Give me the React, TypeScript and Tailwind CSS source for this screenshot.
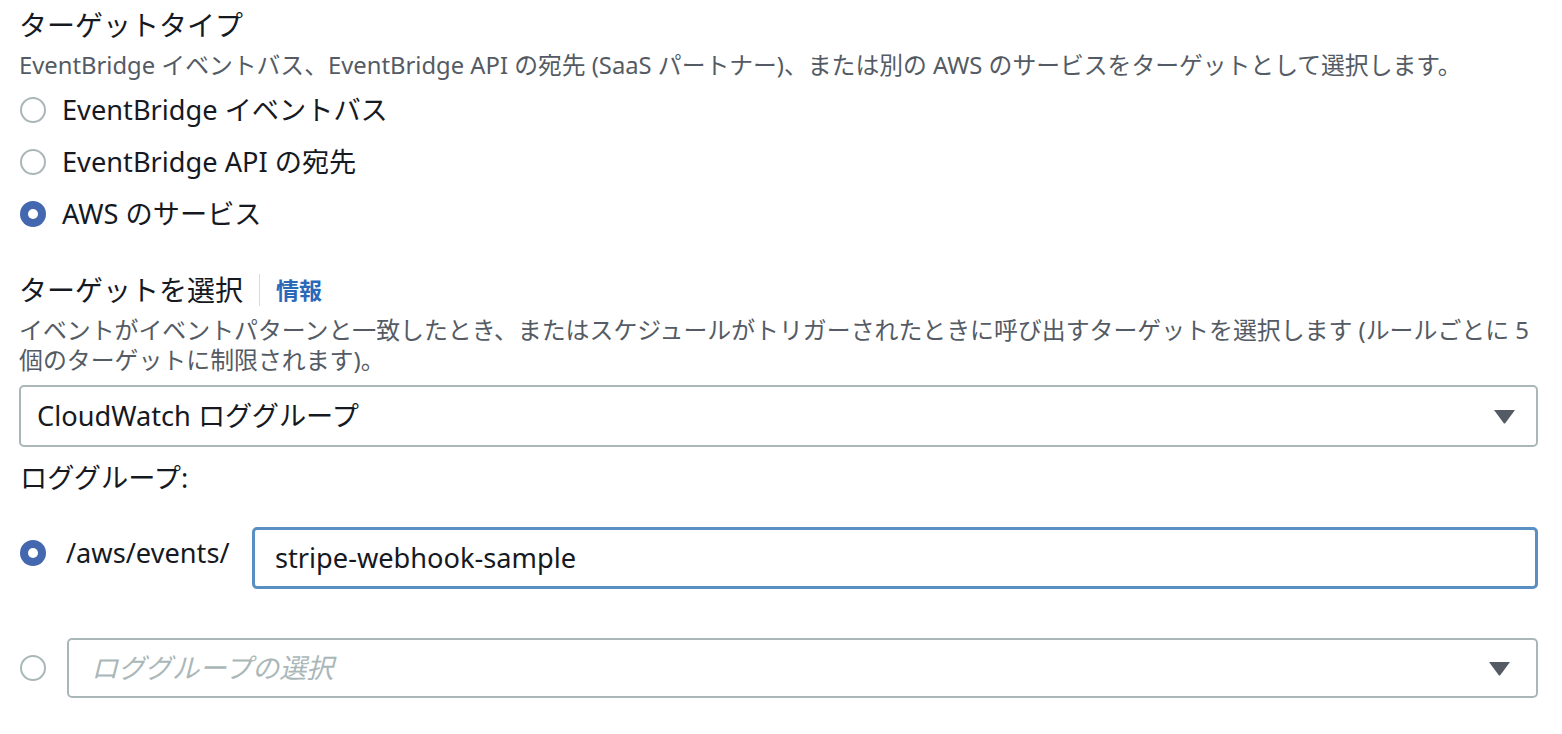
import React from 'react';

const font = { fontFamily: '"Noto Sans", "Noto Sans CJK JP", sans-serif' };

function Radio({ checked }: { checked?: boolean }) {
  return checked ? (
    <span className="w-[26px] h-[26px] rounded-full bg-[#4468b0] flex items-center justify-center shrink-0">
      <span className="w-[10px] h-[10px] rounded-full bg-white" />
    </span>
  ) : (
    <span className="block w-[26px] h-[26px] rounded-full border-2 border-[#aab7b8] bg-white shrink-0" />
  );
}

function Caret() {
  return (
    <svg width="23" height="15" viewBox="0 0 23 15" className="shrink-0">
      <path d="M1 1 H22 L12.4 14 Q11.5 15 10.6 14 Z" fill="#545b64" />
    </svg>
  );
}

export default function App() {
  return (
    <div className="w-[1562px] h-[734px] bg-white text-[#16191f] pl-[19px] pr-[24px]" style={font}>
      <div className="pt-[7px] text-[28px] leading-[36px]">ターゲットタイプ</div>
      <div className="mt-[7px] text-[23.8px] leading-[30px] text-[#545b64] whitespace-nowrap">
        EventBridge イベントバス、EventBridge API の宛先 (SaaS パートナー)、または別の AWS のサービスをターゲットとして選択します。
      </div>
      <div className="flex flex-col mt-[4px]">
        {[
          { label: 'EventBridge イベントバス', checked: false },
          { label: 'EventBridge API の宛先', checked: false },
          { label: 'AWS のサービス', checked: true },
        ].map((r) => (
          <div key={r.label} className="flex items-center gap-[16px] h-[52px] pl-[1px]">
            <Radio checked={r.checked} />
            <span className="text-[27.2px]">{r.label}</span>
          </div>
        ))}
      </div>

      <div className="flex items-center mt-[32px] h-[36px]">
        <span className="text-[28px]">ターゲットを選択</span>
        <span className="w-px h-[32px] bg-[#d5dbdb] mx-[16px]" />
        <span className="text-[23px] font-bold text-[#2a68b8]">情報</span>
      </div>
      <div className="text-[23.9px] leading-[30px] text-[#545b64] mt-[7px] whitespace-nowrap">
        イベントがイベントパターンと一致したとき、またはスケジュールがトリガーされたときに呼び出すターゲットを選択します (ルールごとに 5
        <br />
        個のターゲットに制限されます)。
      </div>

      <div className="mt-[10px] h-[62px] border-2 border-[#aab7b8] rounded-[5px] flex items-center justify-between pl-[16px] pr-[20px]">
        <span className="text-[27.2px]">CloudWatch ロググループ</span>
        <Caret />
      </div>

      <div className="mt-[13px] text-[27.2px] leading-[36px] pl-[1px]">ロググループ:</div>

      <div className="flex items-start mt-[31px]">
        <div className="flex items-center h-[52px] pl-[1px]">
          <Radio checked />
          <span className="text-[27.2px] ml-[20px] w-[186px]">/aws/events/</span>
        </div>
        <div className="flex-1 h-[62px] border-[3px] border-[#5a8fc4] rounded-[5px] flex items-center pl-[20px]">
          <span className="text-[27.2px]">stripe-webhook-sample</span>
        </div>
      </div>

      <div className="flex items-center mt-[49px]">
        <div className="pl-[1px]">
          <Radio />
        </div>
        <div className="ml-[21px] flex-1 h-[60px] border-2 border-[#aab7b8] rounded-[5px] flex items-center justify-between pl-[22px] pr-[25px]">
          <span className="text-[27.2px] italic text-[#aab7b8]">ロググループの選択</span>
          <Caret />
        </div>
      </div>
    </div>
  );
}
